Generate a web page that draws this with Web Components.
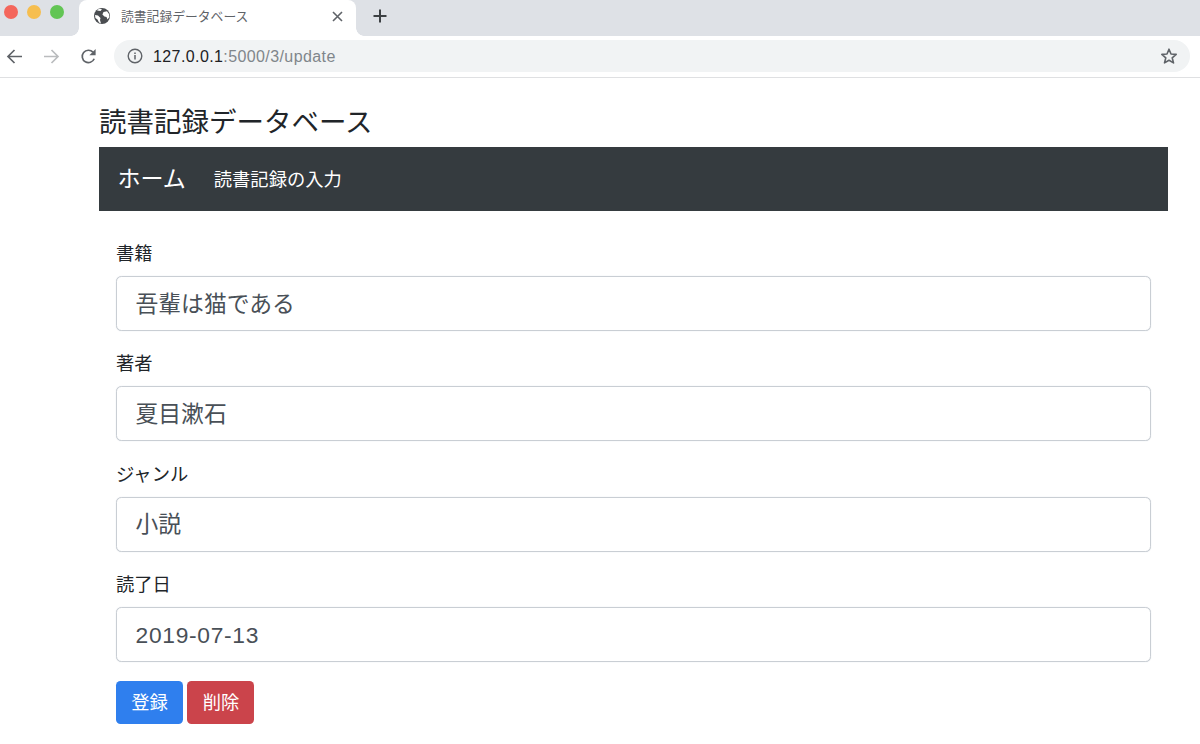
<!DOCTYPE html>
<html lang="ja">
<head>
<meta charset="utf-8">
<title>読書記録データベース</title>
<style>
	html, body { margin: 0; padding: 0; background: #fff; height: 100%; overflow: hidden; }
	body {
		font-family: "Liberation Sans", "Noto Sans CJK JP", sans-serif;
		color: #212529;
	}
</style>
</head>
<body>
<browser-window>
	<book-page heading="読書記録データベース">
		<book-navbar brand="ホーム" link="読書記録の入力"></book-navbar>
		<book-form>
			<form-field label="書籍">吾輩は猫である</form-field>
			<form-field label="著者">夏目漱石</form-field>
			<form-field label="ジャンル">小説</form-field>
			<form-field label="読了日" latin>2019-07-13</form-field>
			<div slot="buttons">
				<book-button color="#2f7fee">登録</book-button>
				<book-button color="#cb444b">削除</book-button>
			</div>
		</book-form>
	</book-page>
</browser-window>

<script>
const browserWindowTemplate = document.createElement('template');
browserWindowTemplate.innerHTML = `
	<style>
		:host {
			display: block;
			height: 744px;
			overflow: hidden;
		}
		.tabs {
			display: flex;
			height: 36px;
			background: #dee1e6;
			box-sizing: border-box;
		}
		.lights {
			display: flex;
			gap: 9px;
			width: 79px;
			box-sizing: border-box;
			padding: 5px 0 0 4px;
		}
		.lights i {
			width: 14px;
			height: 14px;
			border-radius: 50%;
		}
		.tab {
			position: relative;
			display: flex;
			align-items: center;
			width: 277px;
			height: 36px;
			box-sizing: border-box;
			padding: 0 13px 4px 15px;
			background: #fff;
			border-radius: 8px 8px 0 0;
			font-size: 12.8px;
			color: #5f6368;
		}
		.tab::before, .tab::after {
			content: "";
			position: absolute;
			bottom: 0;
			width: 8px;
			height: 8px;
		}
		.tab::before { left: -8px; background: radial-gradient(circle at 0 0, #dee1e6 7.5px, #fff 8px); }
		.tab::after { right: -8px; background: radial-gradient(circle at 100% 0, #dee1e6 7.5px, #fff 8px); }
		.tab .title { flex: 1; margin: -1px 0 0 11px; }
		.plus { margin: 8px 0 0 16px; width: 16px; height: 16px; }
		.toolbar {
			display: flex;
			align-items: center;
			height: 42px;
			box-sizing: border-box;
			border-bottom: 1.5px solid #dfe0e2;
			padding: 0 10px 2px 6px;
			background: #fff;
		}
		.nav {
			display: flex;
			gap: 20px;
			margin: 1px 17px 0 0;
		}
		.nav svg { width: 17px; height: 17px; display: block; }
		.omnibox {
			flex: 1;
			display: flex;
			align-items: center;
			height: 32px;
			border-radius: 16px;
			background: #f1f3f4;
			padding: 0 12px 0 13px;
			font-size: 16px;
			letter-spacing: 0.4px;
		}
		.omnibox .url { display: flex; flex: 1; padding-top: 2px; margin-left: 10px; }
		.omnibox .host { color: #202124; }
		.omnibox .rest { color: #80868b; }
	</style>
	<div class="tabs">
		<div class="lights">
			<i style="background:#f4665c"></i>
			<i style="background:#f6be4f"></i>
			<i style="background:#62c554"></i>
		</div>
		<div class="tab">
			<svg width="16" height="16" viewBox="0 0 16 16">
				<circle cx="8" cy="8" r="8" fill="#4a4d51"/>
				<path d="M3 2.5 L6.5 3 L8 1.2 L5 .8 Z M1 7 L4 7.5 L6.5 10 L6 12 L7 15.5 L5 14.6 L3.5 11.5 L1.4 10 Z M9.5 4 L13 3.2 L15 6 L15.4 9 L13.5 11.5 L12.5 9 L10.4 8.4 L8.4 6.6 Z" fill="#fff"/>
			</svg>
			<span class="title">読書記録データベース</span>
			<svg width="11" height="11" viewBox="0 0 11 11">
				<path d="M1 1 L10 10 M10 1 L1 10" stroke="#5f6368" stroke-width="1.6"/>
			</svg>
		</div>
		<svg class="plus" viewBox="0 0 16 16">
			<path d="M8 1.5 V14.5 M1.5 8 H14.5" stroke="#3c4043" stroke-width="2"/>
		</svg>
	</div>
	<div class="toolbar">
		<div class="nav">
			<svg viewBox="0 0 17 17"><path d="M16 8.5 H2 M8.5 2 L2 8.5 L8.5 15" fill="none" stroke="#5f6368" stroke-width="1.7"/></svg>
			<svg viewBox="0 0 17 17"><path d="M1 8.5 H15 M8.5 2 L15 8.5 L8.5 15" fill="none" stroke="#babcbe" stroke-width="1.7"/></svg>
			<svg viewBox="0 0 17 17"><path d="M14.2 10.8 A6.2 6.2 0 1 1 13 4.2" fill="none" stroke="#5f6368" stroke-width="1.7"/><path d="M15.6 1 V7.2 H9.4 Z" fill="#5f6368"/></svg>
		</div>
		<div class="omnibox">
			<svg width="16" height="16" viewBox="0 0 16 16">
				<circle cx="8" cy="8" r="6.8" fill="none" stroke="#5f6368" stroke-width="1.4"/>
				<path d="M8 7 V11.6 M8 4.4 V5.9" stroke="#5f6368" stroke-width="1.5"/>
			</svg>
			<div class="url"><span class="host">127.0.0.1</span><span class="rest">:5000/3/update</span></div>
			<svg width="18" height="18" viewBox="0 0 18 18">
				<path d="M9 2.2 L11 7 L16.2 7.4 L12.2 10.8 L13.5 15.9 L9 13.2 L4.5 15.9 L5.8 10.8 L1.8 7.4 L7 7 Z" fill="none" stroke="#5f6368" stroke-width="1.6" stroke-linejoin="round"/>
			</svg>
		</div>
	</div>
	<slot></slot>
`;

class BrowserWindow extends HTMLElement {
	constructor() {
		super();
		this.attachShadow({ mode: "open" });
		this.shadowRoot.appendChild(browserWindowTemplate.content.cloneNode(true));
	}
}

const bookPageTemplate = document.createElement('template');
bookPageTemplate.innerHTML = `
	<style>
		:host {
			display: block;
			width: 1069px;
			margin-left: 99px;
		}
		h1 {
			font-size: 27.5px;
			font-weight: 400;
			line-height: 33px;
			margin: 0;
			padding: 28px 0 8px;
			color: #212529;
		}
	</style>
	<h1></h1>
	<slot></slot>
`;

class BookPage extends HTMLElement {
	constructor() {
		super();
		this.attachShadow({ mode: "open" });
		this.shadowRoot.appendChild(bookPageTemplate.content.cloneNode(true));
	}

	connectedCallback() {
		this.shadowRoot.querySelector("h1").textContent = this.getAttribute("heading");
	}
}

const bookNavbarTemplate = document.createElement('template');
bookNavbarTemplate.innerHTML = `
	<style>
		:host {
			display: flex;
			align-items: center;
			height: 64px;
			box-sizing: border-box;
			padding: 0 18.5px 2px;
			background: #353b3f;
			color: #fff;
		}
		.brand { font-size: 23px; margin: -2px 28px 0 0; }
		.link { font-size: 18.3px; }
	</style>
	<span class="brand"></span>
	<span class="link"></span>
`;

class BookNavbar extends HTMLElement {
	constructor() {
		super();
		this.attachShadow({ mode: "open" });
		this.shadowRoot.appendChild(bookNavbarTemplate.content.cloneNode(true));
	}

	connectedCallback() {
		this.shadowRoot.querySelector(".brand").textContent = this.getAttribute("brand");
		this.shadowRoot.querySelector(".link").textContent = this.getAttribute("link");
	}
}

const bookFormTemplate = document.createElement('template');
bookFormTemplate.innerHTML = `
	<style>
		:host {
			display: block;
			padding: 29px 17px 0;
		}
		.fields {
			display: flex;
			flex-direction: column;
			gap: 19.4px;
		}
		.buttons { margin-top: 18.5px; }
	</style>
	<div class="fields"><slot></slot></div>
	<div class="buttons"><slot name="buttons"></slot></div>
`;

class BookForm extends HTMLElement {
	constructor() {
		super();
		this.attachShadow({ mode: "open" });
		this.shadowRoot.appendChild(bookFormTemplate.content.cloneNode(true));
	}
}

const formFieldTemplate = document.createElement('template');
formFieldTemplate.innerHTML = `
	<style>
		:host {
			display: block;
		}
		label {
			display: block;
			font-size: 18.3px;
			line-height: 27px;
			margin-bottom: 9px;
			color: #212529;
		}
		.control {
			display: flex;
			align-items: center;
			height: 55px;
			box-sizing: border-box;
			padding: 0 18.5px 3px;
			border: 1px solid #c9ced4;
			box-shadow: 0 0 1px #ced4da;
			border-radius: 5.5px;
			background: #fff;
			font-size: 22.8px;
			color: #495057;
		}
		:host([latin]) .control {
			padding: 2px 18.5px 0;
			letter-spacing: 0.7px;
		}
	</style>
	<label></label>
	<div class="control"><slot></slot></div>
`;

class FormField extends HTMLElement {
	constructor() {
		super();
		this.attachShadow({ mode: "open" });
		this.shadowRoot.appendChild(formFieldTemplate.content.cloneNode(true));
	}

	connectedCallback() {
		this.shadowRoot.querySelector("label").textContent = this.getAttribute("label");
	}
}

const bookButtonTemplate = document.createElement('template');
bookButtonTemplate.innerHTML = `
	<style>
		:host {
			display: inline-flex;
			align-items: center;
			justify-content: center;
			width: 67px;
			height: 43px;
			box-sizing: border-box;
			padding-bottom: 2px;
			border-radius: 4.5px;
			font-size: 18.3px;
			color: #fff;
		}
	</style>
	<slot></slot>
`;

class BookButton extends HTMLElement {
	constructor() {
		super();
		this.attachShadow({ mode: "open" });
		this.shadowRoot.appendChild(bookButtonTemplate.content.cloneNode(true));
	}

	connectedCallback() {
		this.style.background = this.getAttribute("color");
	}
}

window.customElements.define("browser-window", BrowserWindow);
window.customElements.define("book-page", BookPage);
window.customElements.define("book-navbar", BookNavbar);
window.customElements.define("book-form", BookForm);
window.customElements.define("form-field", FormField);
window.customElements.define("book-button", BookButton);
</script>
</body>
</html>
